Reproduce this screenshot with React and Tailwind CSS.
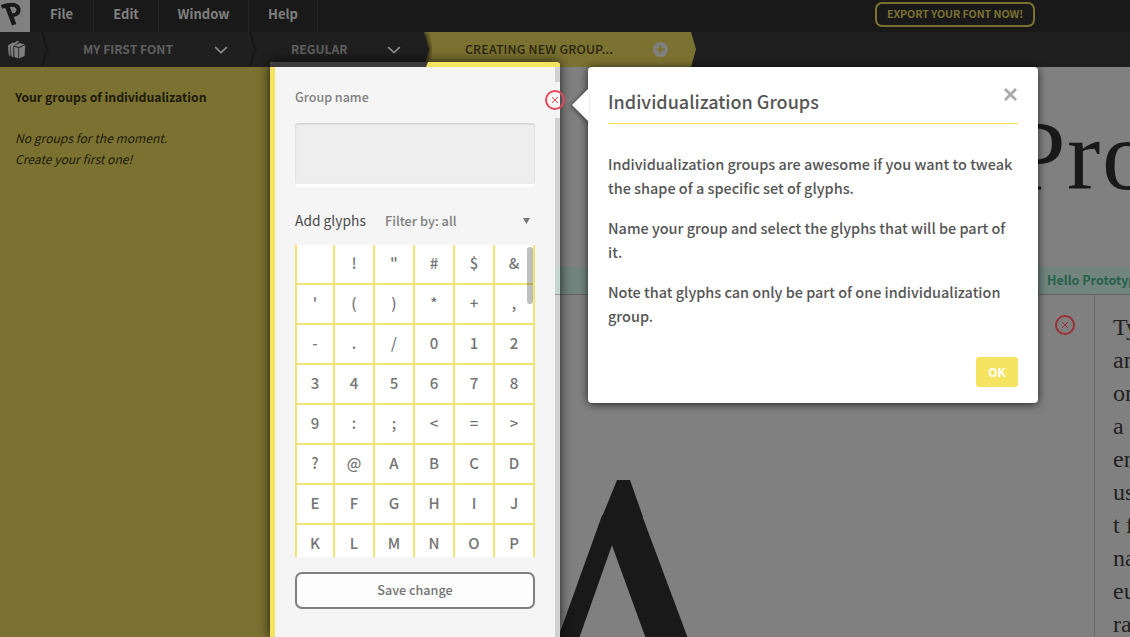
import React from "react";

const MENU = [
  { label: "File", width: "w-[64px]" },
  { label: "Edit", width: "w-[65px]" },
  { label: "Window", width: "w-[90px]" },
  { label: "Help", width: "w-[69px]" },
];

const GLYPHS = [" ", ..."!\"#$&'()*+,-./0123456789:;<=>?@ABCDEFGHIJKLMNOP"];

const PREVIEW_LINES = ["Ty", "an", "on", "a", "en", "us", "t f", "na", "eu", "ra"];

function Cross({ className, color }) {
  return (
    <svg className={className} viewBox="0 0 20 20" fill="none" stroke={color}>
      <circle cx="10" cy="10" r="9" strokeWidth="2" />
      <path d="M7 7l6 6M13 7l-6 6" strokeWidth="1" />
    </svg>
  );
}

function Chevron() {
  return (
    <svg className="h-[8px] w-[14px]" viewBox="0 0 14 8" fill="none" stroke="#8d8d8d" strokeWidth="1.6">
      <path d="M1.2 1.2L7 6.6l5.8-5.4" />
    </svg>
  );
}

function CrumbEdge() {
  return (
    <svg className="h-[35px] w-3" viewBox="0 0 12 35">
      <path d="M0 0h3l5 17.500L3 35H0z" fill="#1f1f1f" className="drop-shadow-[2px_0_1px_rgba(0,0,0,0.35)]" />
    </svg>
  );
}

function Header() {
  return (
    <header className="flex h-8 shrink-0 bg-[#191919]">
      <div className="h-8 w-[30px] bg-[#808080]">
        <svg className="h-8 w-[30px]" viewBox="0 0 30 32" fill="none" stroke="#191919" strokeLinejoin="round">
          <path d="M1.500 6.800C7 5 12 3.800 16 5.700c4 2.200 3 7.300-0.500 8.800-2.500 1-4 .8-5.500.3" strokeWidth="4" />
          <path d="M7 6l7.200 18.800" strokeWidth="4.600" />
        </svg>
      </div>
      <nav className="flex text-[13px] font-bold text-[#808080]">
        {MENU.map((m) => (
          <div key={m.label} className={`${m.width} flex h-8 items-center justify-center border-r border-[#222] pb-[4px]`}>
            {m.label}
          </div>
        ))}
      </nav>
      <button className="mt-[2px] ml-auto mr-[95px] flex h-[25px] w-[160px] items-center justify-center rounded-[7px] border-2 border-[#7b7131] text-[10.700px] font-bold tracking-[-0.1px] whitespace-nowrap text-[#7b7131]">
        EXPORT YOUR FONT NOW!
      </button>
    </header>
  );
}

function Breadcrumbs() {
  return (
    <div className="flex h-[35px] shrink-0 bg-[#1f1f1f] text-[12.150px] font-bold text-[#5f5f5f]">
      <div className="flex w-[38px] items-center pl-2">
        <svg className="h-[19px] w-[18px]" viewBox="0 0 18 19" fill="#808080">
          <path d="M0 5.500L4.500 2.500l2 .5-3.800 2.800v10.400L0.700 15z" />
          <path d="M2.500 5.500L9 1l2.500.6L5.500 6v11.200l-2-.8z" />
          <path d="M6 5.800L12 3l4.800 1.400-6 2.600z" />
          <path d="M6 6.800l4.500 1.200v10.500L6.400 17zM11 8l6.300-2.800L16.500 16 11 18.500z" />
          <path d="M2.400 6v10.300M5.700 6.200v11M10.800 7.700v10.800" stroke="#1f1f1f" strokeWidth=".5" />
        </svg>
      </div>
      <CrumbEdge />
      <div className="flex w-[196px] items-center">
        <span className="ml-[33px] w-[131px] pb-px whitespace-nowrap">MY FIRST FONT</span>
        <Chevron />
      </div>
      <CrumbEdge />
      <div className="flex w-[162px] items-center">
        <span className="ml-[33px] w-[96px] pb-px whitespace-nowrap">REGULAR</span>
        <Chevron />
      </div>
      <div className="flex w-[276px] items-center bg-[#7b7131] text-[#29260f] [clip-path:polygon(0_0,271px_0,276px_50%,271px_100%,0_100%)]">
        <svg className="h-[35px] w-3" viewBox="0 0 12 35">
          <path d="M0 0h4l5 17.500L4 35H0z" fill="#1f1f1f" className="drop-shadow-[2px_0_2px_rgba(0,0,0,0.6)]" />
        </svg>
        <span className="ml-[33px] w-[188px] pb-px text-[12.300px] font-medium tracking-[0.180px] whitespace-nowrap">CREATING NEW GROUP...</span>
        <svg className="h-[15px] w-[15px]" viewBox="0 0 15 15">
          <circle cx="7.500" cy="7.500" r="7.500" fill="#808080" />
          <path d="M7.500 3.200v8.600M3.200 7.500h8.600" stroke="#7b7131" strokeWidth="2" />
        </svg>
      </div>
    </div>
  );
}

function Sidebar() {
  return (
    <aside className="w-[270px] shrink-0 bg-[#7b7131] px-[15px] pt-[20px] text-[12.250px] leading-[21px] whitespace-nowrap text-[#1c1a0a]">
      <h2 className="font-bold">Your groups of individualization</h2>
      <p className="mt-[19px] text-[12.100px] italic">
        No groups for the moment.
        <br />
        Create your first one!
      </p>
    </aside>
  );
}

function Workspace() {
  return (
    <main className="flex min-w-0 flex-1 flex-col overflow-hidden bg-[#808080]">
      <div className="h-[200px] shrink-0 overflow-hidden pt-[29px] pl-[740px] font-['Liberation_Serif',serif] text-[100px] leading-[120px] tracking-[1.500px] whitespace-nowrap text-[#191919]">
        Pro
      </div>
      <div className="flex h-7 shrink-0 items-center border-b border-[#626262] bg-[#71847d] pl-[777px] text-[12.500px] font-bold whitespace-nowrap text-[#26614a]">
        Hello Prototypo
      </div>
      <div className="flex h-[342px] shrink-0">
        <div className="flex w-[825px] shrink-0 justify-between border-r border-[#6a6a6a] pr-[19px]">
          <div className="mt-[185px] ml-[200px] h-[157px] w-[400px] overflow-hidden">
            <div className="ml-[132px] h-[37px] w-[41px] bg-[#191919] [clip-path:polygon(15px_0,28px_0,41px_100%,0_100%)]" />
            <div className="-mt-[63px] h-[400px] font-['Liberation_Serif',serif] text-[430px] leading-[400px] text-[#191919]">A</div>
          </div>
          <Cross className="mt-5 h-5 w-5" color="#9b2f38" />
        </div>
        <div className="mt-4 ml-[18px] font-['Liberation_Serif',serif] text-[24px] leading-[33px] whitespace-nowrap text-[#222]">
          {PREVIEW_LINES.map((l) => (
            <div key={l}>{l}</div>
          ))}
        </div>
      </div>
    </main>
  );
}

function GroupPanel() {
  return (
    <section className="absolute top-[62px] left-[270px] flex h-[575px] w-[290px] flex-col rounded-t-[4px] shadow-[0_0_12px_rgba(0,0,0,0.8)]">
      <div className="flex h-[5px] shrink-0 overflow-hidden rounded-t-[3px] bg-[#f5e462]">
        <div className="h-[5px] w-[158px] bg-[#3c3c3c] [clip-path:polygon(0_0,100%_0,156px_100%,0_100%)]" />
      </div>
      <div className="flex flex-1 flex-col border-r-[5px] border-l-[5px] border-r-[#d0d1d1] border-l-[#f5e462] bg-[#f5f5f5] px-5">
        <label className="mt-5 text-[12.500px] leading-5 font-medium text-[#808080]">Group name</label>
        <div className="mt-4 h-[64px] rounded-[4px] border-b-[3px] border-white bg-[#eeeeee] shadow-[inset_0_1px_2px_rgba(0,0,0,0.15)]" />
        <div className="mt-[22px] flex h-6 items-center whitespace-nowrap">
          <span className="w-[90px] pb-px text-[13.800px] text-[#4a4a4a]">Add glyphs</span>
          <span className="text-[12.800px] font-medium text-[#808080]">Filter by: all</span>
          <svg className="mr-[5px] ml-auto h-[6px] w-[7px]" viewBox="0 0 7 6">
            <path d="M0 0h7L3.500 6z" fill="#777" />
          </svg>
        </div>
        <div className="relative mt-3 h-[312px] overflow-hidden bg-white">
          <div className="grid grid-cols-6">
            {GLYPHS.map((g, i) => (
              <div
                key={i}
                className="flex h-10 items-center justify-center border-r-2 border-b-2 border-[#f0e474] pb-px text-[15px] font-medium text-[#747474] [&:nth-child(6n+1)]:border-l-2"
              >
                {g}
              </div>
            ))}
          </div>
          <div className="absolute top-[2px] right-[2px] h-[57px] w-[6px] rounded-full bg-black/25" />
        </div>
        <button className="mt-[15px] h-[37px] rounded-[7px] border-2 border-[#808080] bg-[#fdfdfd] text-[12.600px] font-medium text-[#747474]">
          Save change
        </button>
      </div>
      <div className="absolute top-5 right-0 h-9 w-[5px] bg-[#f5f5f5]" />
      <div className="absolute top-[205px] right-0 h-7 w-[5px] border-b border-[#9a9a9a] bg-[#c3d8d0]" />
      <Cross className="absolute top-7 right-[-5px] h-5 w-5" color="#e8455a" />
    </section>
  );
}

function HelpDialog() {
  return (
    <section className="absolute top-[67px] left-[588px] h-[336px] w-[450px] rounded-[4px] bg-white px-5 text-[#555] shadow-[0_1px_8px_rgba(0,0,0,0.75)]">
      <svg className="absolute top-[22px] left-[-16px] h-8 w-[17px] drop-shadow-[-2px_1px_2px_rgba(0,0,0,0.4)]" viewBox="0 0 17 32">
        <path d="M17 0h-1L0 16l16 16h1z" fill="#fff" />
      </svg>
      <header className="flex h-[56px] justify-between pt-[21px]">
        <h1 className="text-[18px] leading-[26px] font-medium whitespace-nowrap">Individualization Groups</h1>
        <svg className="mr-px h-[13px] w-[13px]" viewBox="0 0 13 13" stroke="#aaa" strokeWidth="2.800">
          <path d="M1 1l11 11M12 1L1 12" />
        </svg>
      </header>
      <div className="h-px bg-[#f2df4e]" />
      <div className="mt-7 flex flex-col gap-4 text-[14.450px] leading-6 font-medium whitespace-nowrap">
        <p>Individualization groups are awesome if you want to tweak<br />the shape of a specific set of glyphs.</p>
        <p>Name your group and select the glyphs that will be part of<br />it.</p>
        <p>Note that glyphs can only be part of one individualization<br />group.</p>
      </div>
      <button className="mt-[29px] ml-auto block h-[30px] w-[42px] rounded-[3px] bg-[#f5e462] text-[12px] font-bold text-white">OK</button>
    </section>
  );
}

export default function App() {
  return (
    <div className="relative flex h-[637px] w-[1130px] flex-col overflow-hidden bg-[#808080] font-['Noto_Sans_CJK_SC',sans-serif]">
      <Header />
      <Breadcrumbs />
      <div className="flex h-[570px]">
        <Sidebar />
        <Workspace />
      </div>
      <GroupPanel />
      <HelpDialog />
    </div>
  );
}
